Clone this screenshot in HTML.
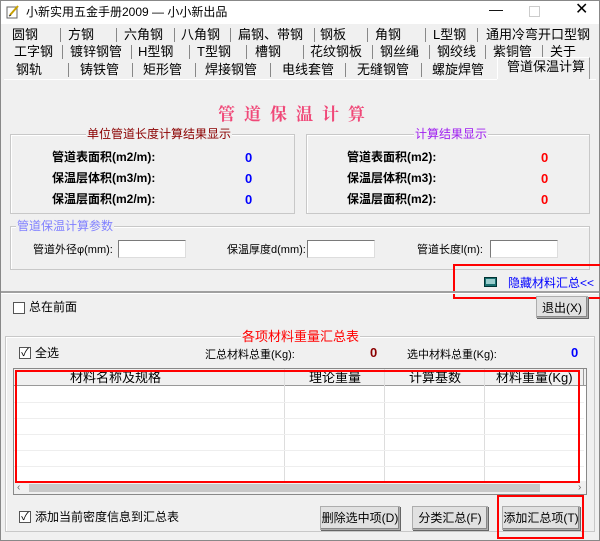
<!DOCTYPE html>
<html><head><meta charset="utf-8"><style>
*{margin:0;padding:0;box-sizing:border-box}
body{width:600px;height:541px;background:#f0f0f0;font-family:"Liberation Sans","Noto Sans CJK SC","WenQuanYi Zen Hei",sans-serif;font-size:12px;line-height:15px;color:#000;position:relative;overflow:hidden}
.a{position:absolute;white-space:nowrap}
.t{font-size:13px;line-height:16px}
.sep{position:absolute;width:1px;height:14px;background:#888}
.grp{position:absolute;border:1px solid #c8c8c8;box-shadow:inset 1px 1px 0 #fff}
.lbl{position:absolute;background:#f0f0f0;padding:0 1px;line-height:13px}
.b{font-weight:bold;font-size:12px}
.inp{position:absolute;background:#fff;border:1px solid #7a7a7a;border-right-color:#ddd;border-bottom-color:#ddd;height:18px;width:68px}
.btn{position:absolute;border:1px solid #adadad;background:#e1e1e1;box-shadow:inset -1px -1px 0 #888,1px 1px 0 #666;text-align:center;line-height:22px;font-size:12px}
.cb{position:absolute;width:12px;height:12px;border:1px solid #555;background:#fff;font-size:11px;line-height:10px;text-align:center}
.rb{position:absolute;border:2px solid #f00}
.sm{font-size:11px}
</style></head><body>
<div class="a" style="left:0;top:0;width:600px;height:24px;background:#fff;border:1px solid #888;border-bottom:none"></div>
<div class="a" style="left:0;top:0;width:1px;height:541px;background:#888"></div>
<div class="a" style="right:0;top:0;width:1px;height:541px;background:#888"></div>
<div class="a" style="left:0;bottom:0;width:600px;height:1px;background:#888"></div>
<svg class="a" style="left:6px;top:5px" width="14" height="14"><rect x="1" y="2" width="10" height="11" fill="#fff" stroke="#666"/><path d="M4 10 L12 1" stroke="#c8a000" stroke-width="2"/><path d="M3 11l2-1" stroke="#333"/></svg>
<div class="a" style="left:26px;top:5px;font-size:12px">小新实用五金手册2009 — 小小新出品</div>
<div class="a" style="left:489px;top:2px;font-size:14px">—</div>
<div class="a" style="left:529px;top:6px;width:11px;height:11px;border:1px solid #ccc"></div>
<div class="a" style="left:575px;top:2px;font-size:16px">✕</div>

<div class="a t" style="left:12px;top:27px">圆钢</div><div class="sep" style="left:60px;top:28px"></div>
<div class="a t" style="left:68px;top:27px">方钢</div><div class="sep" style="left:116px;top:28px"></div>
<div class="a t" style="left:124px;top:27px">六角钢</div><div class="sep" style="left:174px;top:28px"></div>
<div class="a t" style="left:181px;top:27px">八角钢</div><div class="sep" style="left:230px;top:28px"></div>
<div class="a t" style="left:238px;top:27px">扁钢、带钢</div><div class="sep" style="left:314px;top:28px"></div>
<div class="a t" style="left:320px;top:27px">钢板</div><div class="sep" style="left:367px;top:28px"></div>
<div class="a t" style="left:375px;top:27px">角钢</div><div class="sep" style="left:425px;top:28px"></div>
<div class="a t" style="left:433px;top:27px">L型钢</div><div class="sep" style="left:477px;top:28px"></div>
<div class="a t" style="left:486px;top:27px">通用冷弯开口型钢</div>

<div class="a t" style="left:14px;top:44px">工字钢</div><div class="sep" style="left:62px;top:45px"></div>
<div class="a t" style="left:70px;top:44px">镀锌钢管</div><div class="sep" style="left:131px;top:45px"></div>
<div class="a t" style="left:138px;top:44px">H型钢</div><div class="sep" style="left:189px;top:45px"></div>
<div class="a t" style="left:197px;top:44px">T型钢</div><div class="sep" style="left:246px;top:45px"></div>
<div class="a t" style="left:255px;top:44px">槽钢</div><div class="sep" style="left:303px;top:45px"></div>
<div class="a t" style="left:310px;top:44px">花纹钢板</div><div class="sep" style="left:372px;top:45px"></div>
<div class="a t" style="left:380px;top:44px">钢丝绳</div><div class="sep" style="left:429px;top:45px"></div>
<div class="a t" style="left:437px;top:44px">钢绞线</div><div class="sep" style="left:485px;top:45px"></div>
<div class="a t" style="left:493px;top:44px">紫铜管</div><div class="sep" style="left:542px;top:45px"></div>
<div class="a t" style="left:550px;top:44px">关于</div>

<div class="a t" style="left:16px;top:62px">钢轨</div><div class="sep" style="left:68px;top:63px"></div>
<div class="a t" style="left:80px;top:62px">铸铁管</div><div class="sep" style="left:132px;top:63px"></div>
<div class="a t" style="left:143px;top:62px">矩形管</div><div class="sep" style="left:195px;top:63px"></div>
<div class="a t" style="left:205px;top:62px">焊接钢管</div><div class="sep" style="left:270px;top:63px"></div>
<div class="a t" style="left:282px;top:62px">电线套管</div><div class="sep" style="left:345px;top:63px"></div>
<div class="a t" style="left:357px;top:62px">无缝钢管</div><div class="sep" style="left:421px;top:63px"></div>
<div class="a t" style="left:432px;top:62px">螺旋焊管</div>
<div class="a" style="left:497px;top:57px;width:93px;height:22px;background:#f0f0f0;border:1px solid #fff;border-bottom:none;border-right-color:#999"></div>
<div class="a t" style="left:507px;top:59px">管道保温计算</div>
<div class="a" style="left:4px;top:79px;width:493px;height:1px;background:#fff"></div>
<div class="a" style="left:590px;top:79px;width:6px;height:1px;background:#fff"></div>

<div class="a" style="left:218px;top:102px;font-family:'Noto Serif CJK SC',serif;font-weight:bold;font-size:17px;line-height:22px;color:#f04878;letter-spacing:9px">管道保温计算</div>

<div class="grp" style="left:10px;top:134px;width:285px;height:80px"></div>
<div class="lbl" style="left:86px;top:128px;color:#8b0000">单位管道长度计算结果显示</div>
<div class="a b" style="left:52px;top:150px">管道表面积(m2/m):</div>
<div class="a b" style="left:52px;top:171px">保温层体积(m3/m):</div>
<div class="a b" style="left:52px;top:192px">保温层面积(m2/m):</div>
<div class="a" style="left:245px;top:150px;color:#0000ff;font-size:13px;font-weight:bold">0</div>
<div class="a" style="left:245px;top:171px;color:#0000ff;font-size:13px;font-weight:bold">0</div>
<div class="a" style="left:245px;top:192px;color:#0000ff;font-size:13px;font-weight:bold">0</div>

<div class="grp" style="left:306px;top:134px;width:284px;height:80px"></div>
<div class="lbl" style="left:414px;top:128px;color:#a020f0">计算结果显示</div>
<div class="a b" style="left:347px;top:150px">管道表面积(m2):</div>
<div class="a b" style="left:347px;top:171px">保温层体积(m3):</div>
<div class="a b" style="left:347px;top:192px">保温层面积(m2):</div>
<div class="a" style="left:541px;top:150px;color:#f00;font-size:13px;font-weight:bold">0</div>
<div class="a" style="left:541px;top:171px;color:#f00;font-size:13px;font-weight:bold">0</div>
<div class="a" style="left:541px;top:192px;color:#f00;font-size:13px;font-weight:bold">0</div>

<div class="grp" style="left:10px;top:226px;width:580px;height:44px"></div>
<div class="lbl" style="left:16px;top:220px;color:#8080ff">管道保温计算参数</div>
<div class="a sm" style="left:33px;top:243px">管道外径φ(mm):</div><div class="inp" style="left:118px;top:240px"></div>
<div class="a sm" style="left:227px;top:243px">保温厚度d(mm):</div><div class="inp" style="left:307px;top:240px"></div>
<div class="a sm" style="left:417px;top:243px">管道长度l(m):</div><div class="inp" style="left:490px;top:240px"></div>

<div class="a" style="left:484px;top:277px;width:13px;height:10px;background:#1a7070;border:1px solid #033"></div>
<div class="a" style="left:486px;top:279px;width:9px;height:5px;background:#9cc"></div>
<div class="a" style="left:508px;top:276px;color:#0000ff">隐藏材料汇总&lt;&lt;</div>
<div class="rb" style="left:453px;top:264px;width:150px;height:35px"></div>
<div class="a" style="left:1px;top:291px;width:598px;height:3px;background:#a0a0a0;border-bottom:1px solid #fff"></div>

<div class="cb" style="left:13px;top:302px"></div>
<div class="a" style="left:29px;top:300px">总在前面</div>
<div class="btn" style="left:536px;top:296px;width:52px;height:22px">退出(X)</div>

<div class="grp" style="left:5px;top:336px;width:590px;height:196px"></div>
<div class="lbl" style="left:241px;top:330px;color:#f00;font-size:13px">各项材料重量汇总表</div>
<div class="cb" style="left:19px;top:347px">✓</div>
<div class="a" style="left:35px;top:346px">全选</div>
<div class="a sm" style="left:205px;top:348px">汇总材料总重(Kg):</div>
<div class="a" style="left:370px;top:345px;color:#8b0000;font-weight:bold;font-size:13px">0</div>
<div class="a sm" style="left:407px;top:348px">选中材料总重(Kg):</div>
<div class="a" style="left:571px;top:345px;color:#0000ff;font-weight:bold;font-size:13px">0</div>

<div class="a" style="left:13px;top:368px;width:574px;height:127px;background:#fff;border:1px solid #888"></div>
<div class="a" style="left:14px;top:369px;width:572px;height:17px;background:#f0f0f0;border-bottom:1px solid #999"></div>
<div class="a t" style="left:70px;top:370px">材料名称及规格</div>
<div class="a" style="left:284px;top:369px;width:1px;height:112px;background:#ddd"></div>
<div class="a" style="left:384px;top:369px;width:1px;height:112px;background:#ddd"></div>
<div class="a" style="left:484px;top:369px;width:1px;height:112px;background:#ddd"></div>
<div class="a" style="left:583px;top:369px;width:1px;height:17px;background:#999"></div>
<div class="a t" style="left:309px;top:370px">理论重量</div>
<div class="a t" style="left:409px;top:370px">计算基数</div>
<div class="a t" style="left:496px;top:370px">材料重量(Kg)</div>
<div class="a" style="left:14px;top:402px;width:570px;height:1px;background:#eee"></div>
<div class="a" style="left:14px;top:418px;width:570px;height:1px;background:#eee"></div>
<div class="a" style="left:14px;top:434px;width:570px;height:1px;background:#eee"></div>
<div class="a" style="left:14px;top:450px;width:570px;height:1px;background:#eee"></div>
<div class="a" style="left:14px;top:466px;width:570px;height:1px;background:#eee"></div>
<div class="a" style="left:14px;top:481px;width:572px;height:13px;background:#f0f0f0"></div>
<div class="a" style="left:29px;top:484px;width:511px;height:8px;background:#c8c8c8"></div>
<div class="a" style="left:17px;top:480px;font-size:10px;color:#666">‹</div>
<div class="a" style="left:578px;top:480px;font-size:10px;color:#666">›</div>
<div class="rb" style="left:15px;top:370px;width:565px;height:113px"></div>

<div class="cb" style="left:19px;top:511px">✓</div>
<div class="a" style="left:35px;top:510px">添加当前密度信息到汇总表</div>
<div class="btn" style="left:320px;top:506px;width:80px;height:24px">删除选中项(D)</div>
<div class="btn" style="left:412px;top:506px;width:76px;height:24px">分类汇总(F)</div>
<div class="btn" style="left:502px;top:506px;width:78px;height:24px">添加汇总项(T)</div>
<div class="rb" style="left:497px;top:495px;width:87px;height:44px"></div>
</body></html>
